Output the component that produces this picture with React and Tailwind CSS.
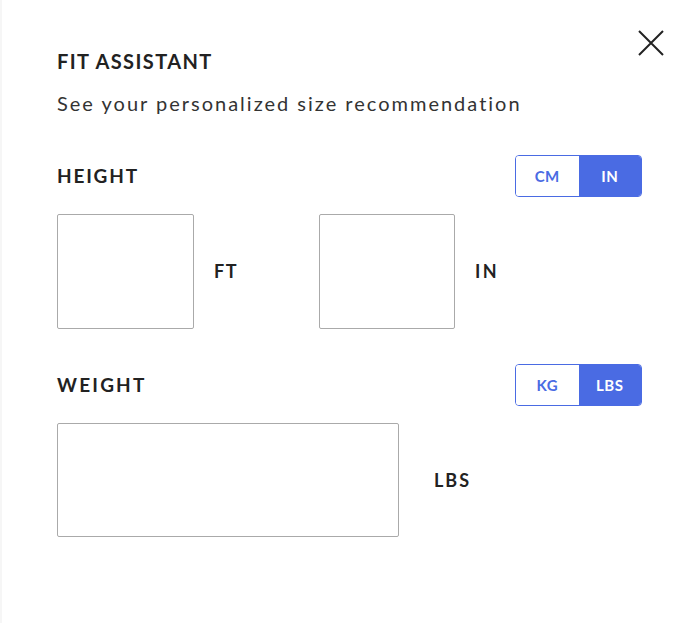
import React from "react";

function Toggle({ left, right }) {
  return (
    <div className="flex h-[42px] w-[127px] rounded-[4px] border border-[#4a6be3] overflow-hidden">
      <div className="flex-1 flex items-center justify-center bg-white text-[#4a6be3] text-[15px] font-bold tracking-[0.5px]">{left}</div>
      <div className="flex-1 flex items-center justify-center bg-[#4a6be3] text-white text-[15px] font-bold tracking-[0.5px]">{right}</div>
    </div>
  );
}

export default function App() {
  return (
    <div className="relative w-[696px] h-[623px] bg-white border-l-2 border-[#f6f6f6] text-[#222]" style={{ fontFamily: "Lato, 'Open Sans', sans-serif" }}>
      <button className="absolute left-[635px] top-[29px] w-[28px] h-[28px]">
        <svg width="28" height="28" viewBox="0 0 28 28" fill="none" stroke="#222" strokeWidth="2">
          <path d="M2 2 L26 26 M26 2 L2 26" />
        </svg>
      </button>
      <div className="pl-[55px] pr-[54px] pt-[47px]">
        <h1 className="text-[20px] leading-[28px] font-bold tracking-[1.4px]">FIT ASSISTANT</h1>
        <p className="mt-[14px] text-[20px] leading-[28px] text-[#333] tracking-[2px]">See your personalized size recommendation</p>

        <div className="mt-[38px] flex items-center justify-between">
          <h2 className="text-[19px] font-bold tracking-[1.8px]">HEIGHT</h2>
          <Toggle left="CM" right="IN" />
        </div>
        <div className="mt-[17px] flex items-center">
          <div className="w-[137px] h-[115px] border border-[#aaa] rounded-[2px]" />
          <span className="ml-[20px] text-[18px] font-bold tracking-[1.5px]">FT</span>
          <div className="ml-[81px] w-[136px] h-[115px] border border-[#aaa] rounded-[2px]" />
          <span className="ml-[20px] text-[18px] font-bold tracking-[2.5px]">IN</span>
        </div>

        <div className="mt-[35px] flex items-center justify-between">
          <h2 className="text-[19px] font-bold tracking-[2.2px]">WEIGHT</h2>
          <Toggle left="KG" right="LBS" />
        </div>
        <div className="mt-[17px] flex items-center">
          <div className="w-[342px] h-[114px] border border-[#aaa] rounded-[2px]" />
          <span className="ml-[35px] text-[18px] font-bold tracking-[2px]">LBS</span>
        </div>
      </div>
    </div>
  );
}
